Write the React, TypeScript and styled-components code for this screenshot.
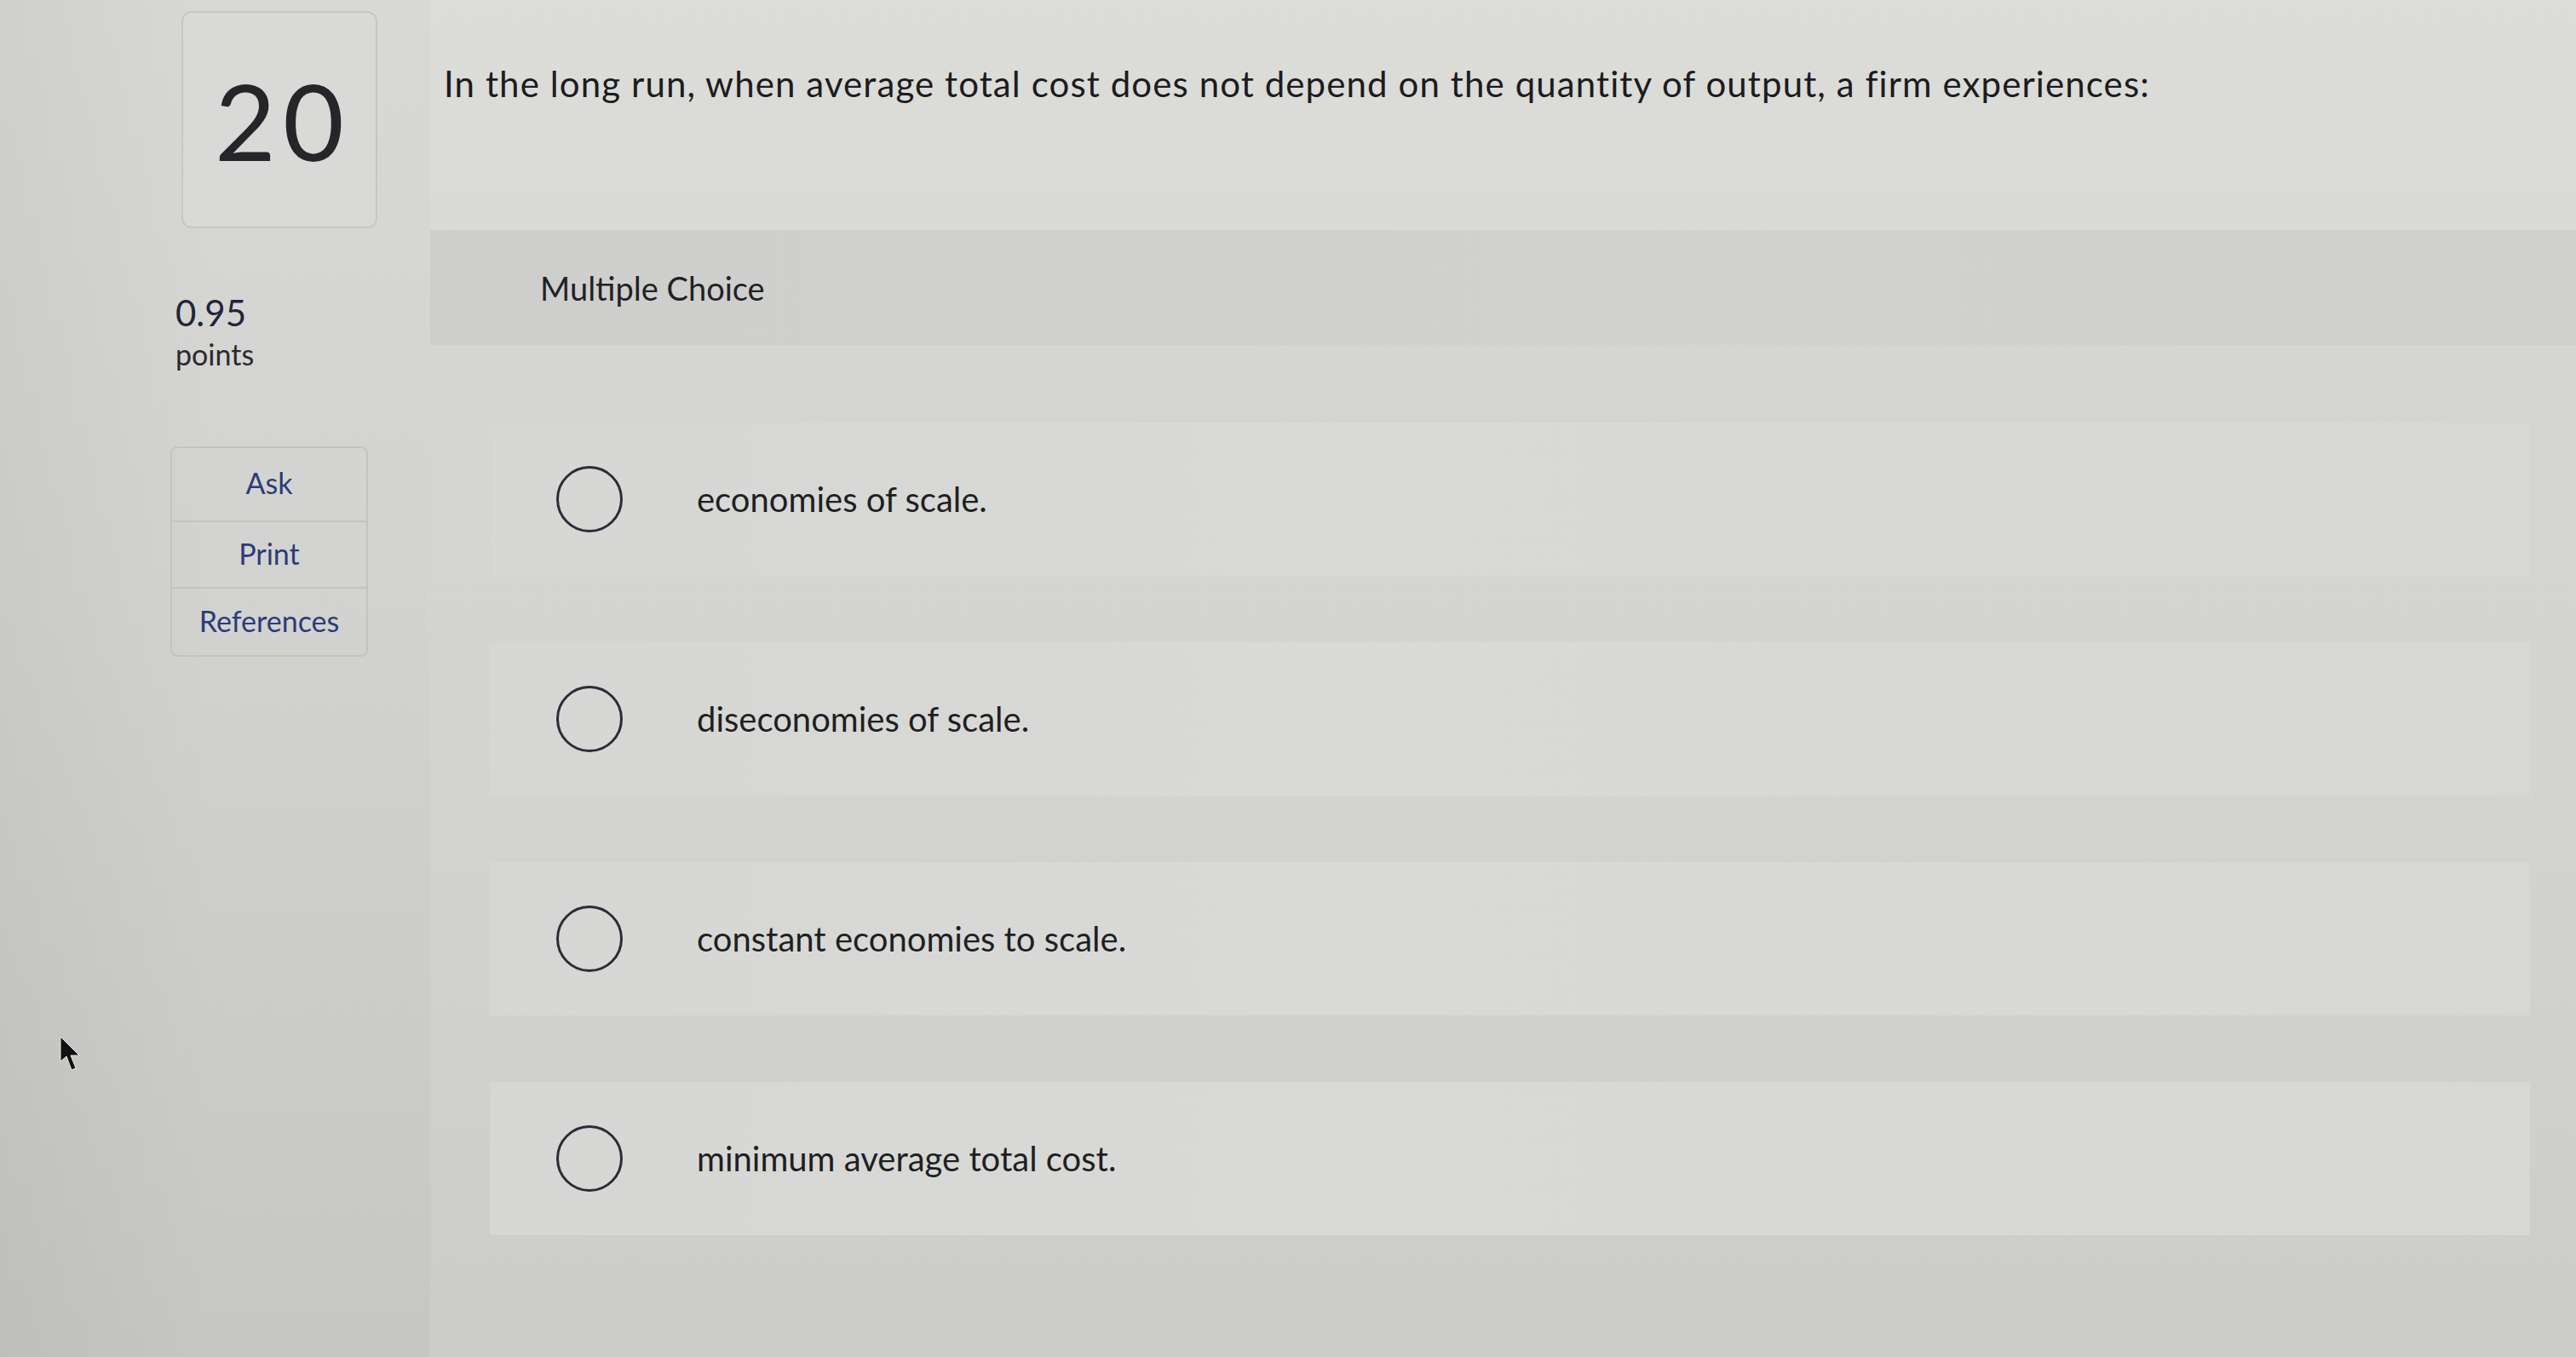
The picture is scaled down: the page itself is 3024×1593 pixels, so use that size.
import React from 'react'
import styled, { createGlobalStyle } from 'styled-components'

const GlobalStyle = createGlobalStyle`
  html, body {
    margin: 0;
    padding: 0;
  }
  body {
    font-family: Lato, "Open Sans", "Liberation Sans", sans-serif;
    color: #1f1f23;
    background: #d3d4d1;
  }
`

const Page = styled.div`
  position: relative;
  display: grid;
  grid-template-columns: 505px 1fr;
  width: 3024px;
  height: 1593px;
  overflow: hidden;
  background: linear-gradient(180deg, #dcdcd9 0%, #d7d8d5 40%, #d0d1cd 100%);
`

const Sidebar = styled.aside`
  display: flex;
  flex-direction: column;
  align-items: flex-start;
  padding: 13px 0 0 206px;
  background: linear-gradient(90deg, rgba(0, 0, 0, 0.04) 0%, rgba(0, 0, 0, 0) 50%),
    linear-gradient(180deg, #d8d9d6 0%, #d2d3d0 45%, #c6c7c3 100%);
`

const NumberBox = styled.div`
  width: 230px;
  height: 255px;
  box-sizing: border-box;
  margin-left: 7px;
  padding-left: 8px;
  border: 2px solid #c6c7c4;
  border-radius: 12px;
  display: flex;
  align-items: center;
  justify-content: center;
  font-size: 124px;
  letter-spacing: 8px;
  line-height: 1;
  color: #26262a;
  background: #d9dad7;
`

const Score = styled.div`
  margin-top: 75px;
  font-size: 42px;
  line-height: 48px;
  color: #23243a;
`

const ScoreLabel = styled.div`
  margin-top: 4px;
  font-size: 34px;
  line-height: 41px;
  color: #2a2a2e;
`

const ToolBox = styled.div`
  margin-top: 88px;
  margin-left: -6px;
  width: 228px;
  display: flex;
  flex-direction: column;
  border: 2px solid #c3c4c1;
  border-radius: 8px;
  overflow: hidden;
`

const ToolButton = styled.div<{ $h: number }>`
  height: ${({ $h }) => $h}px;
  display: flex;
  align-items: center;
  justify-content: center;
  padding-bottom: 4px;
  box-sizing: border-box;
  font-size: 34px;
  color: #2c3c78;
  & + & {
    border-top: 2px solid #c3c4c1;
  }
`

const Main = styled.main`
  display: flex;
  flex-direction: column;
  padding-top: 74px;
`

const Question = styled.div`
  padding-left: 16px;
  margin-bottom: 148px;
  font-size: 42px;
  letter-spacing: 1.1px;
  line-height: 48px;
  color: #1c1c20;
  white-space: nowrap;
`

const Panel = styled.section`
  flex: 1;
  display: flex;
  flex-direction: column;
  background: linear-gradient(180deg, #d5d6d3 0%, #d3d4d1 50%, #cccdc9 100%);
`

const PanelHeader = styled.div`
  height: 135px;
  display: flex;
  align-items: center;
  padding-left: 129px;
  font-size: 38px;
  color: #222226;
  background: linear-gradient(90deg, #cecfcc 0%, #d1d2cf 60%, #cfd0cd 100%);
`

const Choices = styled.div`
  display: flex;
  flex-direction: column;
  gap: 78px;
  padding: 91px 54px 0 70px;
`

const Choice = styled.div`
  height: 180px;
  display: flex;
  align-items: center;
  padding-left: 78px;
  background: linear-gradient(90deg, #d6d7d4 0%, #d9dad7 40%, #d7d8d5 100%);
`

const Radio = styled.span`
  width: 78px;
  height: 78px;
  box-sizing: border-box;
  flex-shrink: 0;
  border: 3px solid #2c2c38;
  border-radius: 50%;
`

const ChoiceText = styled.span`
  margin-left: 87px;
  font-size: 40px;
  color: #1f1f23;
`

const Cursor = styled.svg`
  position: absolute;
  left: 70px;
  top: 1216px;
`

const choices = [
  'economies of scale.',
  'diseconomies of scale.',
  'constant economies to scale.',
  'minimum average total cost.',
]

const App: React.FC = () => (
  <>
    <GlobalStyle />
    <Page>
      <Sidebar>
        <NumberBox>20</NumberBox>
        <Score>0.95</Score>
        <ScoreLabel>points</ScoreLabel>
        <ToolBox>
          <ToolButton $h={85}>Ask</ToolButton>
          <ToolButton $h={78}>Print</ToolButton>
          <ToolButton $h={80}>References</ToolButton>
        </ToolBox>
      </Sidebar>
      <Main>
        <Question>
          In the long run, when average total cost does not depend on the quantity of output, a firm experiences:
        </Question>
        <Panel>
          <PanelHeader>Multiple Choice</PanelHeader>
          <Choices>
            {choices.map((c) => (
              <Choice key={c}>
                <Radio />
                <ChoiceText>{c}</ChoiceText>
              </Choice>
            ))}
          </Choices>
        </Panel>
      </Main>
      <Cursor width="26" height="42" viewBox="0 0 26 42">
        <polygon points="1,1 1,30 8,24 14,40 19,38 13,23 23,23" fill="#111" stroke="#e6e6e6" strokeWidth="1" />
      </Cursor>
    </Page>
  </>
)

export default App
